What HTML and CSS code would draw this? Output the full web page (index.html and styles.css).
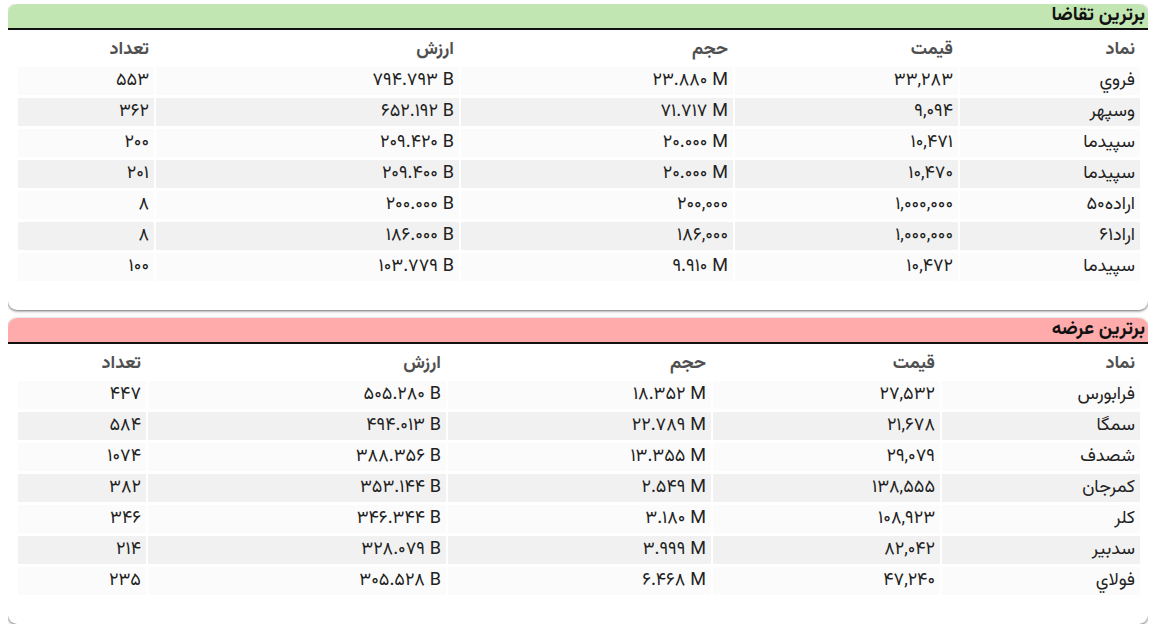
FILE: index.html
```html
<!DOCTYPE html>
<html lang="fa">
<head>
<meta charset="utf-8">
<link rel="stylesheet" href="styles.css">
</head>
<body>
<section class="panel">
  <div class="panel-head green"><h2 class="title">برترین تقاضا</h2></div>
  <table class="grid">
    <colgroup>
      <col class="c-sym1"><col class="c-price1"><col class="c-vol1"><col class="c-val1"><col class="c-cnt1">
    </colgroup>
    <thead>
      <tr><th>نماد</th><th>قیمت</th><th>حجم</th><th>ارزش</th><th>تعداد</th></tr>
    </thead>
    <tbody>
      <tr><td>فروي</td><td class="n">۳۳,۲۸۳</td><td class="n">۲۳.۸۸۰ M</td><td class="n">۷۹۴.۷۹۳ B</td><td class="n">۵۵۳</td></tr>
      <tr><td>وسپهر</td><td class="n">۹,۰۹۴</td><td class="n">۷۱.۷۱۷ M</td><td class="n">۶۵۲.۱۹۲ B</td><td class="n">۳۶۲</td></tr>
      <tr><td>سپيدما</td><td class="n">۱۰,۴۷۱</td><td class="n">۲۰.۰۰۰ M</td><td class="n">۲۰۹.۴۲۰ B</td><td class="n">۲۰۰</td></tr>
      <tr><td>سپيدما</td><td class="n">۱۰,۴۷۰</td><td class="n">۲۰.۰۰۰ M</td><td class="n">۲۰۹.۴۰۰ B</td><td class="n">۲۰۱</td></tr>
      <tr><td>اراده۵۰</td><td class="n">۱,۰۰۰,۰۰۰</td><td class="n">۲۰۰,۰۰۰</td><td class="n">۲۰۰.۰۰۰ B</td><td class="n">۸</td></tr>
      <tr><td>اراد۶۱</td><td class="n">۱,۰۰۰,۰۰۰</td><td class="n">۱۸۶,۰۰۰</td><td class="n">۱۸۶.۰۰۰ B</td><td class="n">۸</td></tr>
      <tr><td>سپيدما</td><td class="n">۱۰,۴۷۲</td><td class="n">۹.۹۱۰ M</td><td class="n">۱۰۳.۷۷۹ B</td><td class="n">۱۰۰</td></tr>
    </tbody>
  </table>
</section>
<section class="panel">
  <div class="panel-head pink"><h2 class="title">برترین عرضه</h2></div>
  <table class="grid">
    <colgroup>
      <col class="c-sym2"><col class="c-price2"><col class="c-vol2"><col class="c-val2"><col class="c-cnt2">
    </colgroup>
    <thead>
      <tr><th>نماد</th><th>قیمت</th><th>حجم</th><th>ارزش</th><th>تعداد</th></tr>
    </thead>
    <tbody>
      <tr><td>فرابورس</td><td class="n">۲۷,۵۳۲</td><td class="n">۱۸.۳۵۲ M</td><td class="n">۵۰۵.۲۸۰ B</td><td class="n">۴۴۷</td></tr>
      <tr><td>سمگا</td><td class="n">۲۱,۶۷۸</td><td class="n">۲۲.۷۸۹ M</td><td class="n">۴۹۴.۰۱۳ B</td><td class="n">۵۸۴</td></tr>
      <tr><td>شصدف</td><td class="n">۲۹,۰۷۹</td><td class="n">۱۳.۳۵۵ M</td><td class="n">۳۸۸.۳۵۶ B</td><td class="n">۱۰۷۴</td></tr>
      <tr><td>كمرجان</td><td class="n">۱۳۸,۵۵۵</td><td class="n">۲.۵۴۹ M</td><td class="n">۳۵۳.۱۴۴ B</td><td class="n">۳۸۲</td></tr>
      <tr><td>كلر</td><td class="n">۱۰۸,۹۲۳</td><td class="n">۳.۱۸۰ M</td><td class="n">۳۴۶.۳۴۴ B</td><td class="n">۳۴۶</td></tr>
      <tr><td>سدبير</td><td class="n">۸۲,۰۴۲</td><td class="n">۳.۹۹۹ M</td><td class="n">۳۲۸.۰۷۹ B</td><td class="n">۲۱۴</td></tr>
      <tr><td>فولاي</td><td class="n">۴۷,۲۴۰</td><td class="n">۶.۴۶۸ M</td><td class="n">۳۰۵.۵۲۸ B</td><td class="n">۲۳۵</td></tr>
    </tbody>
  </table>
</section>
</body>
</html>
```
FILE: styles.css
```css
html, body {
  background: #ffffff;
}
body {
  margin: 4px 8px 0 8px;
  font-family: "Vazirmatn", "Vazir", "Noto Sans Arabic", "DejaVu Sans", sans-serif;
  font-size: 18px;
  color: #222;
  display: flex;
  flex-direction: column;
  gap: 8px;
  direction: rtl;
}
.panel {
  background: #fff;
  border-radius: 9px;
  box-shadow: 0 1px 3px rgba(0, 0, 0, 0.6);
  padding-bottom: 26px;
}
.panel-head {
  height: 24px;
  border-bottom: 2px solid #111;
  border-radius: 9px 9px 0 0;
  display: flex;
  align-items: center;
  padding: 0 3px;
}
.green { background: #c2e6b1; }
.pink { background: #ffabab; }
.title {
  margin: 0;
  font-size: 19px;
  font-weight: bold;
  color: #111;
  line-height: 24px;
  white-space: nowrap;
}
.grid {
  table-layout: fixed;
  border-collapse: separate;
  border-spacing: 2px 3px;
  margin: 3px 6px 0 8px;
  width: calc(100% - 14px);
}
.grid th, .grid td {
  height: 28px;
  padding: 0 5px;
  line-height: 28px;
  text-align: right;
  vertical-align: middle;
  white-space: nowrap;
}
.grid th {
  font-weight: bold;
  color: #505050;
  background: #fff;
}
.grid td.n {
  direction: ltr;
  text-align: right;
}
.grid tbody tr:nth-child(odd) td { background: #fbfbfb; }
.grid tbody tr:nth-child(even) td { background: #f1f1f1; }

.c-sym1 { width: 180px; }
.c-price1 { width: 223px; }
.c-vol1 { width: 272px; }
.c-val1 { width: 303px; }
.c-cnt1 { width: 136px; }

.c-sym2 { width: 198px; }
.c-price2 { width: 227px; }
.c-vol2 { width: 263px; }
.c-val2 { width: 298px; }
.c-cnt2 { width: 128px; }
```
